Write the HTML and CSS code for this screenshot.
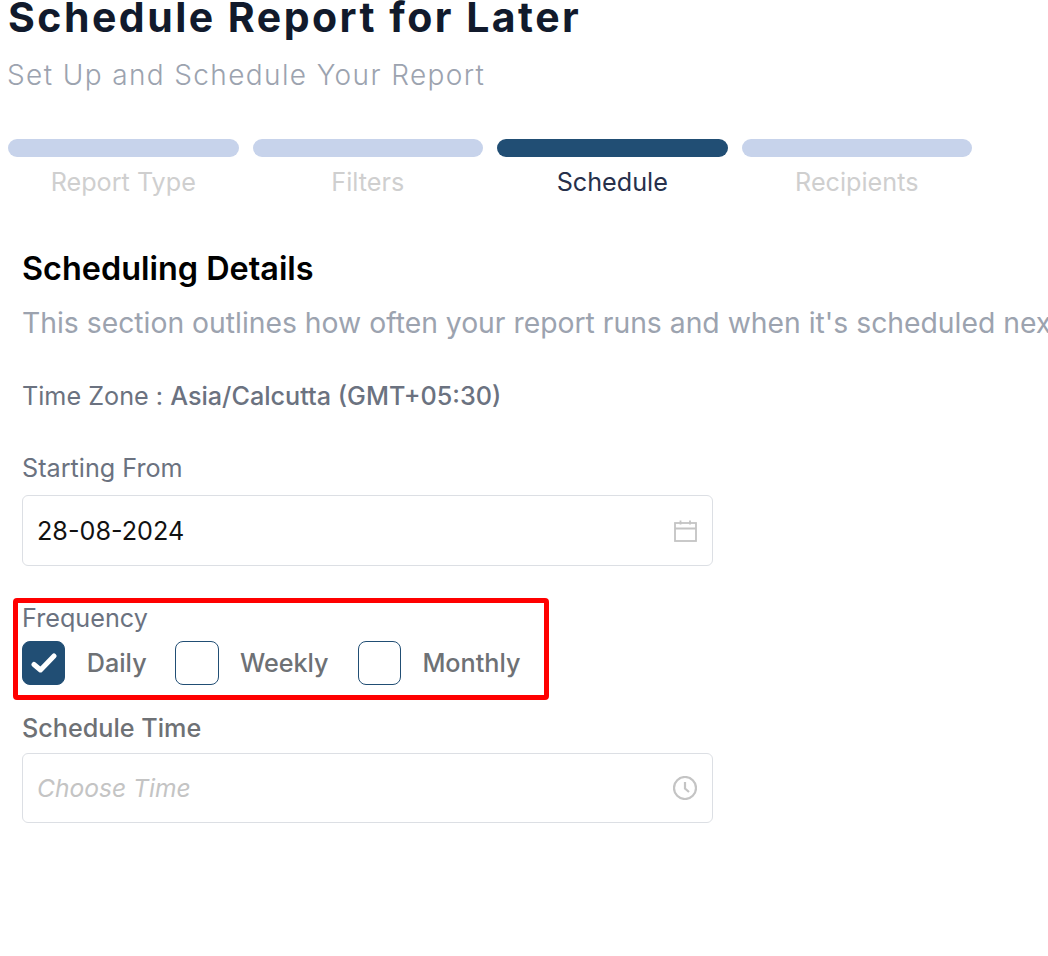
FILE: index.html
```html
<!DOCTYPE html>
<html lang="en">
<head>
<meta charset="utf-8">
<title>Schedule Report for Later</title>
<link rel="stylesheet" href="styles.css">
</head>
<body>
<main class="page">
  <h1 class="title">Schedule Report for Later</h1>
  <p class="subtitle">Set Up and Schedule Your Report</p>
  <ol class="steps">
    <li class="step"><span class="bar"></span><span class="step-label">Report Type</span></li>
    <li class="step"><span class="bar"></span><span class="step-label">Filters</span></li>
    <li class="step active"><span class="bar"></span><span class="step-label">Schedule</span></li>
    <li class="step"><span class="bar"></span><span class="step-label">Recipients</span></li>
  </ol>
  <section class="details">
    <h2 class="heading">Scheduling Details</h2>
    <p class="desc">This section outlines how often your report runs and when it's scheduled next.</p>
    <p class="zone">Time Zone : <strong class="zone-value">Asia/Calcutta (GMT+05:30)</strong></p>
    <label class="field-label">Starting From</label>
    <div class="input">
      <span class="value">28-08-2024</span>
      <svg class="icon" width="24" height="24" viewBox="0 0 24 24" fill="none" stroke="#c4c4c4" stroke-width="1.8"><rect x="2" y="4" width="21" height="18"/><path d="M2 9.5h21M7.5 1.5v4M17 1.5v4"/></svg>
    </div>
    <div class="frequency">
      <div class="freq-label">Frequency</div>
      <div class="options">
        <span class="box checked"><svg width="26" height="20" viewBox="0 0 26 20" fill="none" stroke="#fff" stroke-width="5" stroke-linecap="round" stroke-linejoin="round"><path d="M3 11.5l6.5 5.5L23 3"/></svg></span>
        <span class="opt opt-daily">Daily</span>
        <span class="box"></span>
        <span class="opt opt-weekly">Weekly</span>
        <span class="box"></span>
        <span class="opt">Monthly</span>
      </div>
    </div>
    <label class="time-label">Schedule Time</label>
    <div class="input input-time">
      <span class="placeholder">Choose Time</span>
      <svg class="icon" width="24" height="24" viewBox="0 0 24 24" fill="none" stroke="#c4c4c4" stroke-width="2.2"><circle cx="12" cy="12" r="11"/><path d="M12 6v6.5l4 3.5"/></svg>
    </div>
  </section>
</main>
</body>
</html>
```
FILE: styles.css
```css
* { box-sizing: border-box; }
html, body { margin: 0; padding: 0; background: #fff; overflow: hidden; height: 956px; }
body { font-family: Inter, "Liberation Sans", sans-serif; }
.page { padding: 0 0 0 8px; }
.title {
  margin: 0; height: 36px; font-family: Inter, sans-serif; font-size: 41px; line-height: 34px;
  font-weight: 700; color: #111a2c; letter-spacing: 2.48px; white-space: nowrap;
}
.subtitle {
  margin: 20px 0 0 -1px; height: 38px; font-family: Inter, sans-serif; font-size: 28px; line-height: 38px;
  font-weight: 300; color: #9ca3af; letter-spacing: 1.38px; white-space: nowrap;
}
.steps { list-style: none; margin: 45px 0 0; padding: 0; display: flex; gap: 14px; width: 964px; }
.step { width: 231px; display: flex; flex-direction: column; align-items: center; }
.bar { width: 100%; height: 18px; border-radius: 9px; background: #c7d3eb; }
.step.active .bar { background: #214e74; }
.step-label { margin-top: 7px; font-size: 25.2px; line-height: 36px; color: #cfcfcf; }
.step.active .step-label { color: #27304b; }
.details { padding: 0 0 0 14px; width: 1040px; overflow: hidden; }
.heading { margin: 48px 0 0; font-size: 32.4px; line-height: 42px; font-weight: 600; color: #000; white-space: nowrap; }
.desc { margin: 13px 0 0; font-size: 28.3px; line-height: 40px; color: #9ca3af; white-space: nowrap; }
.zone { margin: 35px 0 0; font-size: 25.2px; line-height: 36px; color: #6b7280; }
.zone-value { font-weight: 500; }
.field-label { display: block; margin-top: 36px; font-size: 25.2px; line-height: 36px; color: #6b7280; }
.input {
  display: flex; align-items: center; justify-content: space-between;
  width: 691px; height: 71px; margin-top: 9px; padding: 0 15px 0 14px;
  border: 1px solid #dcdfe4; border-radius: 6px;
}
.input-time { height: 70px; margin-top: 7px; }
.value { font-size: 25.2px; color: #111; }
.placeholder { font-size: 24.6px; font-style: italic; color: #c4c4c4; }
.icon { flex: none; }
.frequency {
  width: 536px; height: 102px; margin: 32px 0 0 -9px; padding: 0 0 0 4px;
  border: 5px solid #f00; border-radius: 4px;
}
.freq-label { font-size: 25.2px; line-height: 30px; color: #6b7280; }
.options { display: flex; align-items: center; margin-top: 8px; }
.box {
  flex: none; width: 43.4px; height: 44px; display: flex; align-items: center; justify-content: center;
  border: 1px solid #214e74; border-radius: 8px; background: #fff;
}
.box.checked { background: #214e74; }
.opt { font-size: 25.2px; font-weight: 500; color: #6e7175; margin-left: 21.4px; }
.opt-daily { margin-right: 28.5px; }
.opt-weekly { margin-right: 29px; }
.time-label { display: block; margin-top: 10px; font-size: 25.2px; line-height: 36px; font-weight: 500; color: #6e7175; }
```
